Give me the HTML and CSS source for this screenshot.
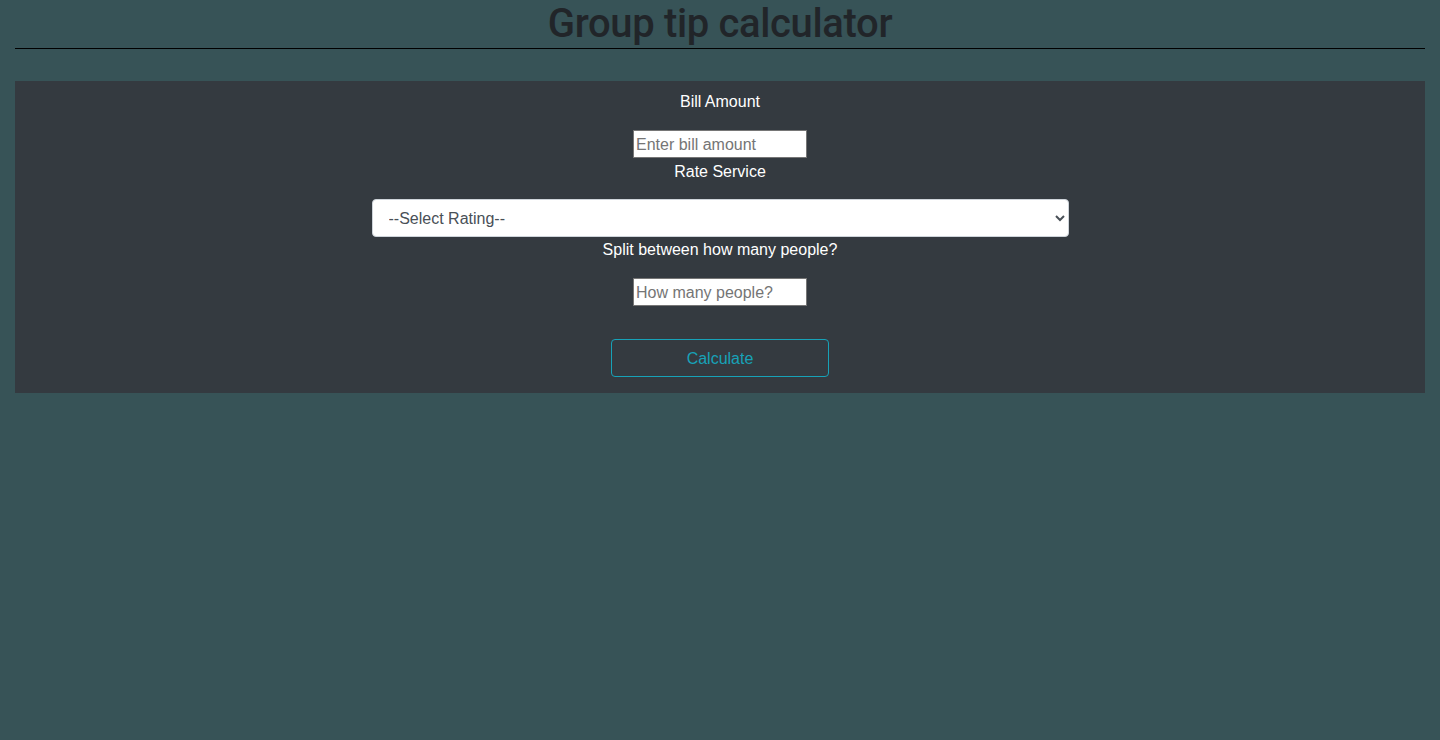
FILE: index.html
```html
<!DOCTYPE html>
<html lang="en">
<head>
<meta charset="utf-8">
<title>Group tip calculator</title>
<link rel="stylesheet" href="styles.css">
</head>
<body>
<div class="page">
  <h1 class="title">Group tip calculator</h1>
  <hr class="rule">
  <div class="panel">
    <label class="label" for="bill">Bill Amount</label>
    <input class="field field-bill" id="bill" type="text" placeholder="Enter bill amount">
    <label class="label" for="rate">Rate Service</label>
    <select class="select" id="rate">
      <option>--Select Rating--</option>
      <option>30% - Outstanding</option>
      <option>20% - Good</option>
      <option>15% - It was OK</option>
      <option>10% - Bad</option>
      <option>5% - Terrible</option>
    </select>
    <label class="label" for="people">Split between how many people?</label>
    <input class="field field-people" id="people" type="text" placeholder="How many people?">
    <button class="btn" type="button">Calculate</button>
  </div>
</div>
</body>
</html>
```
FILE: styles.css
```css
html, body {
  margin: 0;
  padding: 0;
}
body {
  background: #375357;
  font-family: "Liberation Sans", Arial, sans-serif;
  font-size: 16px;
  line-height: 24px;
  color: #212529;
}
.page {
  padding: 0 15px;
}
.title {
  margin: 0;
  font-family: Roboto, "Liberation Sans", sans-serif;
  font-size: 40px;
  line-height: 48px;
  font-weight: 500;
  letter-spacing: -0.35px;
  text-align: center;
  color: #212529;
}
.rule {
  margin: 0 0 32px;
  border: 0;
  border-top: 1px solid #000;
  height: 0;
}
.panel {
  background: #343a40;
  display: flex;
  flex-direction: column;
  align-items: center;
  padding: 8px 0 16px;
}
.label {
  color: #fff;
  font-size: 16px;
  line-height: 24px;
  padding-top: 1px;
  font-weight: 400;
}
.field {
  width: 174px;
  height: 28px;
  box-sizing: border-box;
  border: 1px solid #767676;
  padding: 1px 2px 0;
  font-family: inherit;
  font-size: 16px;
  background: #fff;
  color: #212529;
}
.field::placeholder {
  color: #757575;
}
.field-bill {
  margin: 16px 0 1px;
}
.field-people {
  margin: 16px 0 0;
}
.select {
  width: 697px;
  height: 38px;
  box-sizing: border-box;
  margin: 15px 0 0;
  border: 1px solid #ced4da;
  border-radius: 4px;
  background: #fff;
  color: #495057;
  font-family: inherit;
  font-size: 16px;
  padding: 1px 12px 0;
}
.btn {
  margin-top: 33px;
  width: 218px;
  height: 38px;
  box-sizing: border-box;
  border: 1px solid #17a2b8;
  border-radius: 4px;
  background: transparent;
  color: #17a2b8;
  font-family: inherit;
  font-size: 16px;
  padding: 2px 0 0;
  cursor: pointer;
}
```
